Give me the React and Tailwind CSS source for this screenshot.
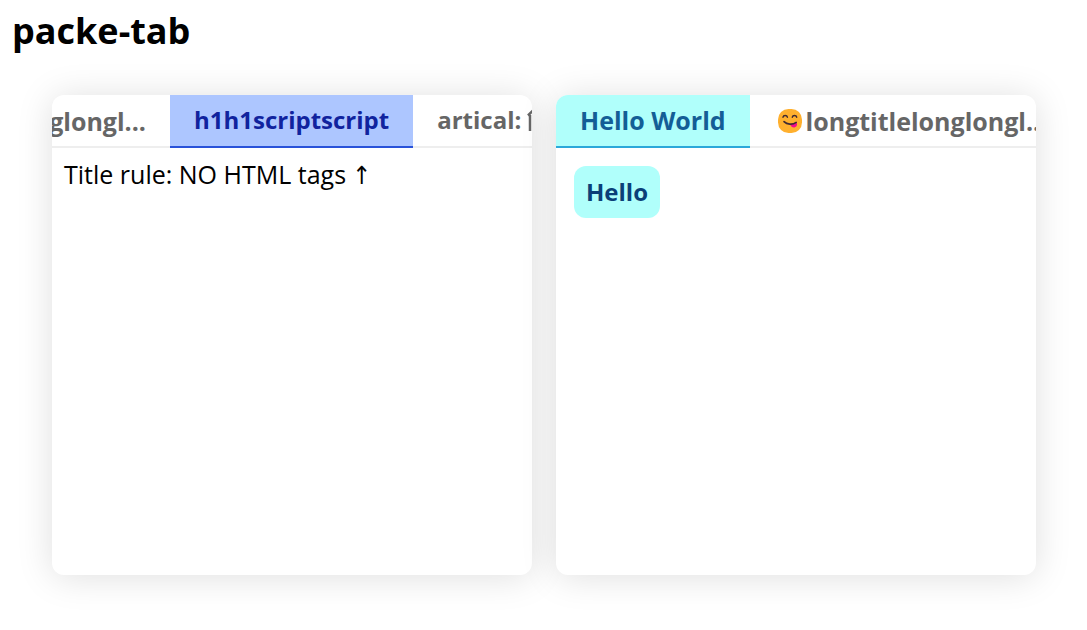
const tabBase =
  "flex h-full shrink-0 items-center border-b-2 leading-8 font-bold whitespace-nowrap";
const idle = "border-[#eeeeee] text-[#666666]";
const title = "pb-px text-[24px]";
const longTitle = "text-[25px]";

function Emoji() {
  return (
    <svg viewBox="0 0 24 24" className="size-6 shrink-0" aria-hidden="true">
      <rect x="0" y="0" width="24" height="24" rx="10.5" fill="#ffb02e" />
      <path d="M5 8.200c.5-2.300 3.900-2.300 4.400 0M14.300 8.200c.5-2.300 3.900-2.300 4.400 0" fill="none" stroke="#402a32" strokeWidth="1.500" strokeLinecap="round" />
      <path d="M12.300 15.300l6.200-2c1.300 2.400.2 4.700-1.900 5.100-2.300.3-4.200-1-4.300-3.100z" fill="#f70a8d" />
      <path d="M6 12.600c3 3 8.500 3.500 12.200.8" fill="none" stroke="#402a32" strokeWidth="1.600" strokeLinecap="round" />
    </svg>
  );
}

function DoubleArrowUp() {
  return (
    <svg viewBox="0 0 14 24" className="h-6 w-[14px] shrink-0" aria-hidden="true" fill="none" stroke="currentColor" strokeWidth="2.5">
      <path d="M1 7.500L7 1.500L13 7.500" />
      <path d="M3 7V23M11 7V23" />
    </svg>
  );
}

function Card({ label, tabs, children }) {
  return (
    <section className="aspect-square min-w-0 flex-1 overflow-hidden rounded-xl bg-white shadow-[0_2px_36px_rgba(0,0,0,0.13)]">
      <div role="tablist" aria-label={label} className="flex h-[53px] overflow-hidden">
        {tabs}
      </div>
      <div role="tabpanel" className="px-3 py-2 text-[25px] leading-9">
        {children}
      </div>
    </section>
  );
}

export default function App() {
  return (
    <main className="bg-white font-['Open_Sans','Noto_Sans',sans-serif] text-black">
      <h1 className="px-3 pt-1 text-[36px] leading-[54px] font-bold">packe-tab</h1>
      <div className="mt-[37px] mr-[51px] mb-[55px] ml-[52px] flex gap-6">
        <Card
          label="Titles"
          tabs={
            <>
              <button type="button" role="tab" aria-selected="false" className={`${tabBase} ${idle} ${longTitle} w-[118px] justify-end overflow-hidden pr-6`}>
                longtitlelonglongl...
              </button>
              <button type="button" role="tab" aria-selected="true" className={`${tabBase} ${title} border-[#2952d9] bg-[#adc6ff] px-6 text-[#10239e]`}>
                h1h1scriptscript
              </button>
              <button type="button" role="tab" aria-selected="false" className={`${tabBase} ${idle} ${title} gap-1.5 px-6`}>
                artical:
                <DoubleArrowUp />
              </button>
            </>
          }
        >
          <p>
            Title rule: NO HTML tags <span className="font-['DejaVu_Sans_Condensed','DejaVu_Sans'] font-extralight">↑</span>
          </p>
        </Card>
        <Card
          label="Greetings"
          tabs={
            <>
              <button type="button" role="tab" aria-selected="true" className={`${tabBase} border-[#2ba8d9] bg-[#b0fffb] px-6 pb-px text-[25px] text-[#135e96]`}>
                Hello World
              </button>
              <button type="button" role="tab" aria-selected="false" className={`${tabBase} ${idle} ${longTitle} gap-1 px-7`}>
                <Emoji />
                longtitlelonglongl...
              </button>
            </>
          }
        >
          <button type="button" className="mx-[6px] my-[10px] block h-[52px] rounded-xl bg-[#b0fffb] px-3 text-[24px] leading-8 font-bold text-[#0b3f78]">
            Hello
          </button>
        </Card>
      </div>
    </main>
  );
}
